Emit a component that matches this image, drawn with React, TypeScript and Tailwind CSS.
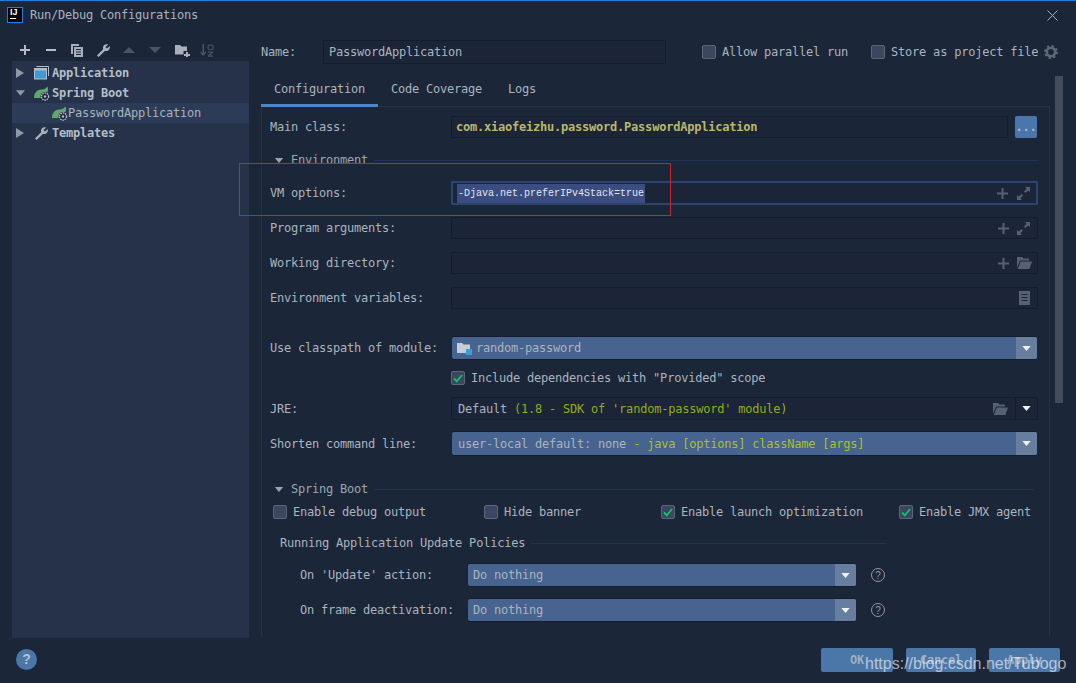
import React from "react";

const mono = "font-['DejaVu_Sans_Mono','Liberation_Mono',monospace] text-[12px] tracking-[-0.22px]";

function TriRight({ c = "#8e98a6" }: { c?: string }) {
  return (
    <svg width="8" height="10" viewBox="0 0 8 10" className="shrink-0">
      <path d="M0 0L8 5L0 10Z" fill={c} />
    </svg>
  );
}
function TriDown({ w = 10, h = 6, c = "#9aa4b0" }: { w?: number; h?: number; c?: string }) {
  return (
    <svg width={w} height={h} viewBox="0 0 10 6" className="shrink-0">
      <path d="M0 0H10L5 6Z" fill={c} />
    </svg>
  );
}
function Wrench({ s = 16, c = "#a9b0ba" }: { s?: number; c?: string }) {
  return (
    <svg width={s} height={s} viewBox="0 0 16 16" className="shrink-0">
      <path
        d="M1 13.2L7.6 6.6C7 4.6 7.6 2.8 9.4 1.8C10.6 1.2 12 1.2 13 1.6L10.2 4.2L11.8 5.8L14.6 3.2C15 4.4 14.8 5.8 14 7C13 8.4 11.2 9 9.4 8.4L2.8 15Z"
        fill={c}
      />
    </svg>
  );
}
function Spring() {
  return (
    <svg width="16" height="15" viewBox="0 0 16 15" className="shrink-0">
      <path d="M0 12C0 6 4 3 8 3.5C10 3.5 12 2.5 13.5 0.5C15 4 13.5 7.5 11 8L7 12H2Z" fill="#5fa76f" />
      <circle cx="11" cy="10.5" r="4.6" fill="#1c2639" />
      <circle cx="11" cy="10.5" r="3.6" fill="none" stroke="#b5bcc6" strokeWidth="1.4" strokeDasharray="1.6 0.7" />
      <circle cx="11" cy="10.5" r="1.2" fill="#b5bcc6" />
    </svg>
  );
}
function Plus({ c = "#566173" }: { c?: string }) {
  return (
    <svg width="11" height="11" viewBox="0 0 11 11" className="shrink-0">
      <path d="M4.5 0H6.5V4.5H11V6.5H6.5V11H4.5V6.5H0V4.5H4.5Z" fill={c} />
    </svg>
  );
}
function Expand() {
  return (
    <svg width="13" height="13" viewBox="0 0 13 13" className="shrink-0">
      <path d="M8 0H13V5L11.2 3.4L8.4 6L7 4.6L9.6 1.8ZM0 13V8L1.8 9.6L4.6 7L6 8.4L3.4 11.2L5 13Z" fill="#566173" />
    </svg>
  );
}
function Folder() {
  return (
    <svg width="15" height="12" viewBox="0 0 15 12" className="shrink-0">
      <path d="M0 0H5L6.5 1.5H12V3.5H3L0 11Z" fill="#566173" />
      <path d="M3.6 4.5H15L12.4 12H0.8Z" fill="#566173" />
    </svg>
  );
}
function Doc() {
  return (
    <svg width="11" height="14" viewBox="0 0 11 14" className="shrink-0">
      <path fillRule="evenodd" d="M0 0H11V14H0ZM2.5 3V4H8.5V3ZM2.5 6V7H8.5V6ZM2.5 9V10H8.5V9Z" fill="#566173" />
    </svg>
  );
}
function Help() {
  return (
    <span className="flex h-[14px] w-[14px] shrink-0 items-center justify-center rounded-full border border-[#8f98a3] font-['Liberation_Sans',sans-serif] text-[10px] text-[#8f98a3]">
      ?
    </span>
  );
}
function Check({ checked = false }: { checked?: boolean }) {
  return (
    <span className="flex h-[14px] w-[14px] shrink-0 items-center justify-center rounded-[2px] border border-[#5f6775] bg-[#3b4660]">
      {checked && (
        <svg width="10" height="9" viewBox="0 0 10 9">
          <path d="M1 4.5L3.8 7.4L9 1" fill="none" stroke="#12c26a" strokeWidth="1.8" />
        </svg>
      )}
    </span>
  );
}
function CheckLabel({ text, checked, cls = "" }: { text: string; checked?: boolean; cls?: string }) {
  return (
    <div className={`flex items-center gap-[6px] ${cls}`}>
      <Check checked={checked} />
      <span className="whitespace-nowrap text-[#a9b4bd]">{text}</span>
    </div>
  );
}
function Label({ text, cls = "w-[181px]" }: { text: string; cls?: string }) {
  return <span className={`shrink-0 whitespace-pre text-[#a9b4bd] ${cls}`}>{text}</span>;
}
function Field({ children, pr = "pr-[7px]" }: { children?: React.ReactNode; pr?: string }) {
  return (
    <div className={`flex h-full w-[587px] items-center justify-end gap-[8px] rounded-[1px] border border-[#141d2d] bg-[#1b2537] ${pr}`}>
      {children}
    </div>
  );
}
function Select({ children, cls = "w-[585px]" }: { children: React.ReactNode; cls?: string }) {
  return (
    <div className={`flex h-full items-center rounded-[2px] bg-[#476390] shadow-[0_-1px_0_#141d2d,0_1px_0_#141d2d] ${cls}`}>
      <div className="flex min-w-0 flex-1 items-center gap-[4px] pl-[5px] text-[#a9b4bd]">{children}</div>
      <div className="flex h-full w-[21px] items-center justify-center rounded-r-[2px] bg-[#677e9f]">
        <TriDown w={9} h={5} c="#eef1f6" />
      </div>
    </div>
  );
}
function Section({ text, line }: { text: string; line: string }) {
  return (
    <div className="flex h-[14px] items-center pl-[4px]">
      <TriDown w={10} h={5} />
      <span className="ml-[7px] whitespace-nowrap text-[#9aa6ae]">{text}</span>
      <div className={`ml-[6px] h-px bg-[#1f3354] ${line}`} />
    </div>
  );
}
function Row({ cls, children }: { cls: string; children: React.ReactNode }) {
  return <div className={`flex items-center ${cls}`}>{children}</div>;
}
function TreeRow({ cls = "", children }: { cls?: string; children: React.ReactNode }) {
  return <div className={`flex h-[20px] items-center ${cls}`}>{children}</div>;
}
function FootButton({ text, cls }: { text: string; cls: string }) {
  return (
    <div className={`flex h-[24px] items-center justify-center rounded-[2px] bg-[#4a76a8] font-bold text-[#9fb0c2] ${cls}`}>
      {text}
    </div>
  );
}

export default function App() {
  return (
    <div className={`relative h-[683px] w-[1076px] overflow-hidden border-t border-[#1a80dc] bg-[#1c2639] ${mono}`}>
      {/* title bar */}
      <div className="flex h-[39px] items-start pl-[7px] pr-[18px] pt-[6px]">
        <div className="flex h-[16px] w-[16px] shrink-0 flex-col border border-[#1a80dc] bg-black px-[2px] leading-none">
          <span className="font-['Liberation_Sans',sans-serif] text-[9px] font-bold leading-[9px] tracking-normal text-white">IJ</span>
          <span className="mt-[1px] h-px w-[6px] bg-white" />
        </div>
        <span className="ml-[7px] leading-[16px] text-[#a9b4bd]">Run/Debug Configurations</span>
        <svg width="11" height="11" viewBox="0 0 11 11" className="ml-auto mt-[3px]">
          <path d="M0.5 0.5L10.5 10.5M10.5 0.5L0.5 10.5" stroke="#a9b0ba" strokeWidth="1" />
        </svg>
      </div>

      <div className="flex">
        {/* left column */}
        <div className="ml-[12px] w-[237px] shrink-0">
          <div className="flex h-[21px] items-center pb-[1px] pl-[7px]">
            <svg width="12" height="12" viewBox="0 0 12 12"><path d="M5 1H7V5H11V7H7V11H5V7H1V5H5Z" fill="#b5bcc6" /></svg>
            <svg width="12" height="12" viewBox="0 0 12 12" className="ml-[14px]"><path d="M1 5H11V7H1Z" fill="#b5bcc6" /></svg>
            <svg width="13" height="13" viewBox="0 0 13 13" className="ml-[14px]"><path fillRule="evenodd" d="M0 0H8V2H2V10H0ZM3 3H12V13H3ZM5 5V6H10V5ZM5 7.5V8.5H10V7.5ZM5 10V11H10V10Z" fill="#a9b0ba" /></svg>
            <span className="ml-[12px]"><Wrench s={15} /></span>
            <svg width="12" height="6" viewBox="0 0 12 6" className="ml-[12px]"><path d="M0 6L6 0L12 6Z" fill="#4b5464" /></svg>
            <svg width="12" height="6" viewBox="0 0 12 6" className="ml-[14px]"><path d="M0 0L6 6L12 0Z" fill="#4b5464" /></svg>
            <svg width="15" height="13" viewBox="0 0 15 13" className="ml-[14px]"><path d="M0 1H5L6.5 2.5H12V7H8.5V10.5H0Z" fill="#a9b0ba" /><path d="M11 8H13V10H15V12H13V13.5H11V12H9V10H11Z" fill="#a9b0ba" /></svg>
            <svg width="14" height="13" viewBox="0 0 14 13" className="ml-[10px]"><path d="M2.5 0H4V9L6 7V9L3.2 12L0.5 9V7L2.5 9Z" fill="#4b5464" /><rect x="8" y="1" width="5" height="4.5" rx="1.5" fill="none" stroke="#4b5464" strokeWidth="1.2" /><path d="M8 7.5H13V8.7L9.8 11.5H13V12.8H8V11.6L11.2 8.8H8Z" fill="#4b5464" /></svg>
          </div>
          <div className="h-[577px] bg-[#25324a] pt-[2px] font-medium text-[#b4bec9]">
            <TreeRow cls="pl-[4px]">
              <TriRight />
              <svg width="15" height="14" viewBox="0 0 15 14" className="ml-[10px] shrink-0">
                <path d="M2.5 0.5H14.5V10" fill="none" stroke="#b5bcc6" />
                <rect x="0.5" y="2.5" width="12" height="10.5" fill="#3d9bd6" stroke="#b5bcc6" />
                <rect x="0.5" y="2.5" width="12" height="2" fill="#b5bcc6" />
              </svg>
              <span className="ml-[3px] font-bold">Application</span>
            </TreeRow>
            <TreeRow cls="pl-[4px]">
              <TriDown w={9} h={8} c="#8e98a6" />
              <span className="ml-[9px]"><Spring /></span>
              <span className="ml-[2px] font-bold">Spring Boot</span>
            </TreeRow>
            <TreeRow cls="bg-[#2c3b57] pl-[40px]">
              <Spring />
              <span className="text-[#a9b4bd]">PasswordApplication</span>
            </TreeRow>
            <TreeRow cls="pl-[4px]">
              <TriRight />
              <span className="ml-[10px]"><Wrench s={15} /></span>
              <span className="ml-[3px] font-bold">Templates</span>
            </TreeRow>
          </div>
        </div>

        {/* right column */}
        <div className="relative w-[827px] shrink-0 pl-[12px]">
          <div className="flex h-[24px] items-center">
            <Label text="Name:" cls="w-[62px]" />
            <div className="flex h-full w-[343px] items-center border border-[#141d2d] bg-[#1b2537] pl-[5px] text-[#a9b4bd]">PasswordApplication</div>
            <CheckLabel text="Allow parallel run" cls="ml-[36px]" />
            <CheckLabel text="Store as project file" cls="ml-[23px]" />
            <svg width="15" height="15" viewBox="0 0 15 15" className="ml-[6px]">
              <circle cx="7" cy="7" r="4.2" fill="none" stroke="#5f6775" strokeWidth="2.6" />
              <circle cx="7" cy="7" r="6" fill="none" stroke="#5f6775" strokeWidth="2" strokeDasharray="2.2 2.5" />
            </svg>
          </div>

          {/* tabs */}
          <div className="mt-[8px] flex h-[34px] items-center text-[#a9b4bd]">
            <div className="relative flex h-full w-[117px] items-center pb-[1px] pl-[13px]">
              Configuration
              <span className="absolute bottom-[-1px] left-0 h-[3px] w-full bg-[#4a88c7]" />
            </div>
            <span className="ml-[13px] pb-[1px]">Code Coverage</span>
            <span className="ml-[26px] pb-[1px]">Logs</span>
          </div>

          {/* panel */}
          <div className="h-[531px] w-[789px] border-l border-r border-t border-[#2a3140] pl-[8px] pt-[9px]">
            <Row cls="h-[22px]">
              <Label text="Main class:" cls="w-[181px] pb-[1px]" />
              <div className="flex h-full w-[557px] items-center border border-[#141d2d] bg-[#1b2537] pb-[1px] pl-[4px] font-bold text-[#b9b86a]">
                com.xiaofeizhu.password.PasswordApplication
              </div>
              <div className="ml-[7px] flex h-full w-[22px] items-center justify-center rounded-[2px] bg-[#4a76ac] font-bold text-[#a9bdd2]">...</div>
            </Row>

            <div className="mt-[15px]"><Section text="Environment" line="w-[665px]" /></div>

            <Row cls="mt-[14px] h-[24px]">
              <Label text="VM options:" />
              <div className="flex h-full w-[587px] items-center rounded-[1px] border-2 border-[#2b4470] bg-[#1b2537] pl-[4px] pr-[6px]">
                <span className="flex h-[19px] items-center bg-[#3a4c80] px-px font-['Liberation_Mono',monospace] text-[10px] tracking-normal text-[#e3e7ee]">-Djava.net.preferIPv4Stack=true</span>
                <span className="ml-auto flex items-center gap-[9px]"><Plus /><Expand /></span>
              </div>
            </Row>
            <Row cls="mt-[12px] h-[22px]">
              <Label text="Program arguments:" />
              <Field><Plus /><Expand /></Field>
            </Row>
            <Row cls="mt-[13px] h-[22px]">
              <Label text="Working directory:" />
              <Field pr="pr-[5px]"><Plus /><Folder /></Field>
            </Row>
            <Row cls="mt-[13px] h-[22px]">
              <Label text="Environment variables:" />
              <Field><Doc /></Field>
            </Row>
            <Row cls="mt-[28px] h-[22px]">
              <Label text="Use classpath of module:" />
              <Select cls="ml-px w-[585px]">
                <svg width="15" height="13" viewBox="0 0 15 13" className="shrink-0">
                  <path d="M0 1H5L6.5 2.5H13V7H9V11H0Z" fill="#c9ced6" />
                  <rect x="9" y="7" width="6" height="6" fill="#3d9bd6" />
                </svg>
                <span>random-password</span>
              </Select>
            </Row>
            <Row cls="mt-[12px] h-[14px] pl-[181px]">
              <CheckLabel text={'Include dependencies with "Provided" scope'} checked />
            </Row>
            <Row cls="mt-[12px] h-[23px]">
              <Label text="JRE:" />
              <div className="flex h-full w-[587px] items-center rounded-[2px] border border-[#141d2d] bg-[#1b2537]">
                <span className="pl-[6px] text-[#a9b4bd]">Default <span className="text-[#8fae1b]">(1.8 - SDK of 'random-password' module)</span></span>
                <span className="ml-auto mr-[7px]"><Folder /></span>
                <div className="flex h-full w-[22px] items-center justify-center border-l border-[#141d2d]">
                  <TriDown w={9} h={5} c="#eef1f6" />
                </div>
              </div>
            </Row>
            <Row cls="mt-[12px] h-[23px]">
              <Label text="Shorten command line:" />
              <Select cls="ml-px w-[585px]">
                <span className="ml-px">user-local default: none <span className="text-[#a6c12a]">- java [options] className [args]</span></span>
              </Select>
            </Row>

            <div className="mt-[27px]"><Section text="Spring Boot" line="w-[660px]" /></div>

            <Row cls="mt-[9px] h-[14px] pl-[3px]">
              <div className="w-[211px]"><CheckLabel text="Enable debug output" /></div>
              <div className="w-[177px]"><CheckLabel text="Hide banner" /></div>
              <div className="w-[238px]"><CheckLabel text="Enable launch optimization" checked /></div>
              <CheckLabel text="Enable JMX agent" checked />
            </Row>

            <Row cls="mt-[17px] h-[14px] pl-[10px]">
              <span className="whitespace-nowrap text-[#a9b4bd]">Running Application Update Policies</span>
              <div className="ml-[6px] h-px w-[356px] bg-[#1f3354]" />
            </Row>
            <Row cls="mt-[14px] h-[22px] pl-[30px]">
              <Label text="On 'Update' action:" cls="w-[168px]" />
              <Select cls="w-[388px]"><span>Do nothing</span></Select>
              <span className="ml-[15px]"><Help /></span>
            </Row>
            <Row cls="mt-[13px] h-[22px] pl-[30px]">
              <Label text="On frame deactivation:" cls="w-[168px]" />
              <Select cls="w-[388px]"><span>Do nothing</span></Select>
              <span className="ml-[15px]"><Help /></span>
            </Row>
          </div>

          {/* scrollbar */}
          <div className="absolute left-[806px] top-[36px] h-[327px] w-[8px] bg-[#434c5c]" />

          {/* footer buttons */}
          <div className="mt-[11px] flex">
            <FootButton text="OK" cls="ml-[560px] w-[72px]" />
            <FootButton text="Cancel" cls="ml-[13px] w-[70px]" />
            <FootButton text="Apply" cls="ml-[13px] w-[71px]" />
          </div>
        </div>
      </div>

      {/* footer help */}
      <div className="absolute left-[16px] top-[648px] flex h-[21px] w-[21px] items-center justify-center rounded-full bg-[#4a76a8] font-['Liberation_Sans',sans-serif] text-[14px] font-bold text-[#b4c0cc]">?</div>

      {/* annotation box */}
      <div className="absolute left-[239px] top-[162px] h-[53px] w-[432px] border border-[#c8242c]" />

      {/* watermark */}
      <div className="absolute left-[865px] top-[653px] whitespace-nowrap font-['Liberation_Sans',sans-serif] text-[16px] leading-[20px] tracking-normal text-white/60">https://blog.csdn.net/Tubogo</div>
    </div>
  );
}
